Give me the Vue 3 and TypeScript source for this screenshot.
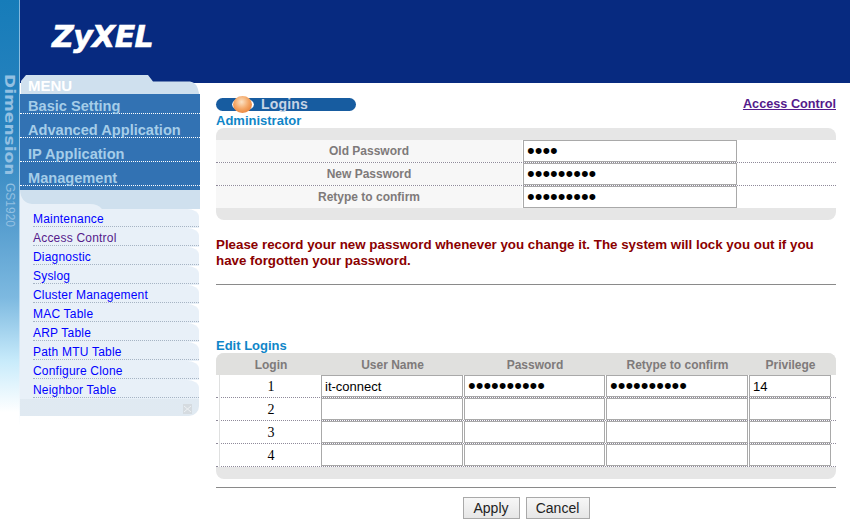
<script setup lang="ts">
interface LoginRow {
  id: number;
  user: string;
  password: string;
  retype: string;
  privilege: string;
}

const mainMenu = ['Basic Setting', 'Advanced Application', 'IP Application', 'Management'];
const subMenu = [
  'Maintenance', 'Access Control', 'Diagnostic', 'Syslog', 'Cluster Management',
  'MAC Table', 'ARP Table', 'Path MTU Table', 'Configure Clone', 'Neighbor Table',
];
const adminRows = [
  { label: 'Old Password', value: 'abcd' },
  { label: 'New Password', value: 'abcdefghi' },
  { label: 'Retype to confirm', value: 'abcdefghi' },
];
const loginRows: LoginRow[] = [
  { id: 1, user: 'it-connect', password: 'abcdefghij', retype: 'abcdefghij', privilege: '14' },
  { id: 2, user: '', password: '', retype: '', privilege: '' },
  { id: 3, user: '', password: '', retype: '', privilege: '' },
  { id: 4, user: '', password: '', retype: '', privilege: '' },
];
</script>

<template>
  <div class="page">
    <aside class="strip">
      <span class="brand">Dimension</span>
      <span class="model">GS1920</span>
    </aside>
    <div class="shell">
      <header class="top">
        <span class="logo">ZyXEL</span>
      </header>
      <div class="body">
        <nav class="side">
          <div class="menu-head">
            <svg class="tab" width="180" height="19" viewBox="0 0 180 19">
              <path d="M1 19V6L6 0H128L133 6.500H170Q177 7 179 18V19Z" fill="#cfe0ee" />
            </svg>
            <span class="menu-title">MENU</span>
          </div>
          <a v-for="item in mainMenu" :key="item" class="main-item">{{ item }}</a>
          <div class="menu-gap"></div>
          <svg class="menu-curve" width="180" height="19" viewBox="0 0 180 19">
            <path d="M0 0H180V19H82Q78 14 70 14H12Q1 13 0 0Z" fill="#cfe0ee" />
          </svg>
          <a v-for="item in subMenu" :key="item" class="sub-item" :class="{ visited: item === 'Access Control' }">
            <span class="sub-text">{{ item }}</span>
          </a>
          <div class="side-foot">
            <svg width="9" height="10" viewBox="0 0 9 10">
              <rect width="9" height="10" fill="#d5dbe0" />
              <path d="M1 2L8 8M8 2L1 8" stroke="#eef2f5" stroke-width="1" />
            </svg>
          </div>
        </nav>
        <main class="content">
          <div class="title-row">
            <div class="pill">
              <span class="halo"></span>
              <span class="ball"></span>
              <span class="pill-text">Logins</span>
            </div>
            <a class="crumb">Access Control</a>
          </div>
          <h2 class="section">Administrator</h2>
          <div class="box admin">
            <div v-for="row in adminRows" :key="row.label" class="admin-row">
              <div class="admin-label">{{ row.label }}</div>
              <input class="field" type="password" :value="row.value" readonly />
            </div>
          </div>
          <p class="warning">Please record your new password whenever you change it. The system will lock you out if you have forgotten your password.</p>
          <hr class="rule" />
          <h2 class="section edit">Edit Logins</h2>
          <div class="box logins">
            <div class="login-head">
              <span class="head-login">Login</span>
              <span>User Name</span>
              <span>Password</span>
              <span>Retype to confirm</span>
              <span>Privilege</span>
            </div>
            <div v-for="row in loginRows" :key="row.id" class="login-row">
              <span class="login-id">{{ row.id }}</span>
              <input class="field text" type="text" :value="row.user" readonly />
              <input class="field" type="password" :value="row.password" readonly />
              <input class="field" type="password" :value="row.retype" readonly />
              <input class="field text" type="text" :value="row.privilege" readonly />
            </div>
          </div>
          <hr class="rule last" />
          <div class="actions">
            <button class="btn apply" type="button">Apply</button>
            <button class="btn cancel" type="button">Cancel</button>
          </div>
        </main>
      </div>
    </div>
  </div>
</template>

<style>
html, body {
  margin: 0;
  background: #fff;
  overflow: hidden;
}
</style>

<style scoped>
.page {
  display: flex;
  width: 850px;
  height: 529px;
  overflow: hidden;
  font-family: "Liberation Sans", Arial, sans-serif;
  background: #fff;
}

.strip {
  width: 20px;
  height: 425px;
  flex: none;
  display: flex;
  flex-direction: column;
  align-items: center;
  padding-top: 74px;
  box-sizing: border-box;
  border-right: 1px solid;
  border-image: linear-gradient(#7fb6dc, #b5d8ef 70%, #fff) 1;
  background: linear-gradient(#167cb9 0, #2a83bf 30%, #5099cc 50%, #7db9e0 70%, #c8ebfb 85%, #ffffff 97%);
  color: #93c0e2;
}

.brand {
  writing-mode: vertical-rl;
  font-family: "DejaVu Sans", sans-serif;
  font-weight: 700;
  font-size: 14px;
  line-height: 16px;
  transform: scaleY(1.22);
  transform-origin: top;
}

.model {
  writing-mode: vertical-rl;
  margin-top: 26px;
  font-size: 12px;
  line-height: 14px;
}

.shell {
  flex: 1;
  display: flex;
  flex-direction: column;
  background: linear-gradient(#072a80 0 83px, #fff 83px);
}

.top {
  height: 75px;
  flex: none;
  padding: 19px 0 0 32px;
  box-sizing: border-box;
}

.logo {
  display: block;
  font-family: "DejaVu Sans", sans-serif;
  font-weight: 700;
  font-style: italic;
  font-size: 30px;
  line-height: 36px;
  letter-spacing: -0.6px;
  color: #fff;
  -webkit-text-stroke: 0.6px #fff;
}

.body {
  flex: 1;
  display: flex;
}

.side {
  width: 180px;
  flex: none;
  display: flex;
  flex-direction: column;
}

.menu-head {
  position: relative;
  height: 19px;
}

.tab {
  position: absolute;
  left: 0;
  top: 0;
}

.menu-title {
  position: relative;
  display: block;
  padding: 3px 0 0 8px;
  font-size: 15px;
  line-height: 16px;
  color: #fff;
  font-weight: 700;
}

.main-item {
  height: 24px;
  box-sizing: border-box;
  padding: 8px 0 0 8px;
  background: #3272b3;
  border-bottom: 1px dotted #fff;
  color: #a5cde9;
  font-size: 14.6px;
  font-weight: 700;
  line-height: 16px;
}

.main-item:first-of-type {
  height: 20px;
  padding-top: 4px;
}

.menu-gap {
  height: 4px;
  background: #3272b3;
}

.menu-curve {
  display: block;
  background: #e8f0f8;
}

.sub-item {
  height: 19px;
  box-sizing: border-box;
  padding-left: 13px;
  background: #e8f0f8;
  border-top-right-radius: 12px 8px;
  margin-right: 1px;
  color: #0000ff;
  font-size: 12px;
  line-height: 20px;
  letter-spacing: 0.2px;
}

.sub-text {
  display: block;
  border-bottom: 1px dotted #a6b4c4;
  height: 17px;
}

.sub-item.visited {
  color: #551a8b;
}

.side-foot {
  height: 17px;
  margin-right: 1px;
  display: flex;
  justify-content: flex-end;
  padding: 5px 7px 0 0;
  box-sizing: border-box;
  border-bottom-right-radius: 10px;
  background-color: #f6f9fb;
  background-image: radial-gradient(#dfe8f1 0.7px, transparent 0.8px);
  background-size: 2px 2px;
}

.content {
  flex: 1;
  margin-top: 8px;
  padding: 14px 14px 0 16px;
  min-width: 0;
  background: #fff;
  border-top-left-radius: 8px;
  height: 446px;
  box-sizing: border-box;
}

.title-row {
  display: flex;
  justify-content: space-between;
  align-items: center;
  height: 14px;
}

.pill {
  position: relative;
  width: 140px;
  height: 13px;
  background: #175ca0;
  border-radius: 7px;
}

.halo {
  position: absolute;
  left: 16px;
  top: 0;
  width: 22px;
  height: 13px;
  border-radius: 50%;
  background: #fff;
}

.ball {
  position: absolute;
  left: 17px;
  top: -2px;
  width: 19px;
  height: 17px;
  border-radius: 50%;
  background: radial-gradient(circle at 45% 35%, #fbe3c6 0, #f4a868 45%, #e4762b 90%);
}

.pill-text {
  position: absolute;
  left: 45px;
  top: -2px;
  font-size: 14px;
  font-weight: 700;
  line-height: 17px;
  color: #c6d4e5;
  letter-spacing: 0.2px;
}

.crumb {
  font-size: 12.7px;
  font-weight: 700;
  color: #551a8b;
  text-decoration: underline;
  line-height: 14px;
}

.section {
  margin: 3px 0 0;
  font-size: 13px;
  line-height: 14px;
  font-weight: 700;
  color: #0f86c8;
}

.section.edit {
  margin-top: 54px;
}

.box {
  border-radius: 8px;
  background: #e6e6e6;
  box-sizing: border-box;
}

.admin {
  padding: 12px 0;
  height: 92px;
}

.admin-row {
  display: flex;
  height: 23px;
  box-sizing: border-box;
  border-bottom: 1px dotted #8f8a9a;
  background: #fff;
}

.admin-row:last-child {
  border-bottom: 0;
  height: 22px;
}

.admin-label {
  width: 306px;
  margin-right: 1px;
  text-align: center;
  background: #f7f7f7;
  font-size: 12px;
  font-weight: 700;
  line-height: 23px;
  color: #7e7a7a;
}

.field {
  display: block;
  width: 214px;
  height: 22px;
  margin: 0;
  padding: 0 3px;
  box-sizing: border-box;
  border: 1px solid #a9a9a9;
  border-radius: 0;
  outline: 0;
  background: #fff;
  font-family: "Liberation Sans", Arial, sans-serif;
  font-size: 22px;
  color: #000;
}

.field.text {
  font-size: 13px;
  line-height: 18px;
}

.warning {
  margin: 17px 0 0;
  font-size: 13.33px;
  font-weight: 700;
  line-height: 16px;
  color: #8b0000;
}

.rule {
  margin: 15px 0 0;
  border: 0;
  height: 1px;
  background: #8a8a8a;
}

.rule.last {
  margin-top: 8px;
}

.logins {
  height: 126px;
}

.login-head {
  display: grid;
  grid-template-columns: 105px 143px 142px 143px 83px;
  height: 22px;
  border-radius: 8px 8px 0 0;
  background: #e0e0de;
  font-size: 12px;
  font-weight: 700;
  line-height: 24px;
  text-align: center;
  color: #7e7a7a;
}

.head-login {
  padding-left: 5px;
}

.login-row {
  display: grid;
  grid-template-columns: 105px 143px 142px 143px 83px 4px;
  height: 23px;
  box-sizing: border-box;
  border-bottom: 1px dotted #8f8a9a;
  background: #fff;
}

.login-row .field {
  width: calc(100% - 1px);
}

.login-id {
  margin-left: 3px;
  border-left: 1px solid #dfe0e0;
  padding-left: 1px;
  text-align: center;
  font-family: "Liberation Serif", serif;
  font-size: 14px;
  line-height: 24px;
  color: #000;
}

.actions {
  display: flex;
  justify-content: center;
  gap: 6px;
  margin-top: 9px;
}

.btn {
  height: 22px;
  padding: 0;
  border: 1px solid #a9a9a9;
  background: linear-gradient(#f7f7f7, #e6e6e6);
  font-family: "Liberation Sans", Arial, sans-serif;
  font-size: 14px;
  color: #222;
}

.apply {
  width: 57px;
}

.cancel {
  width: 64px;
}
</style>
